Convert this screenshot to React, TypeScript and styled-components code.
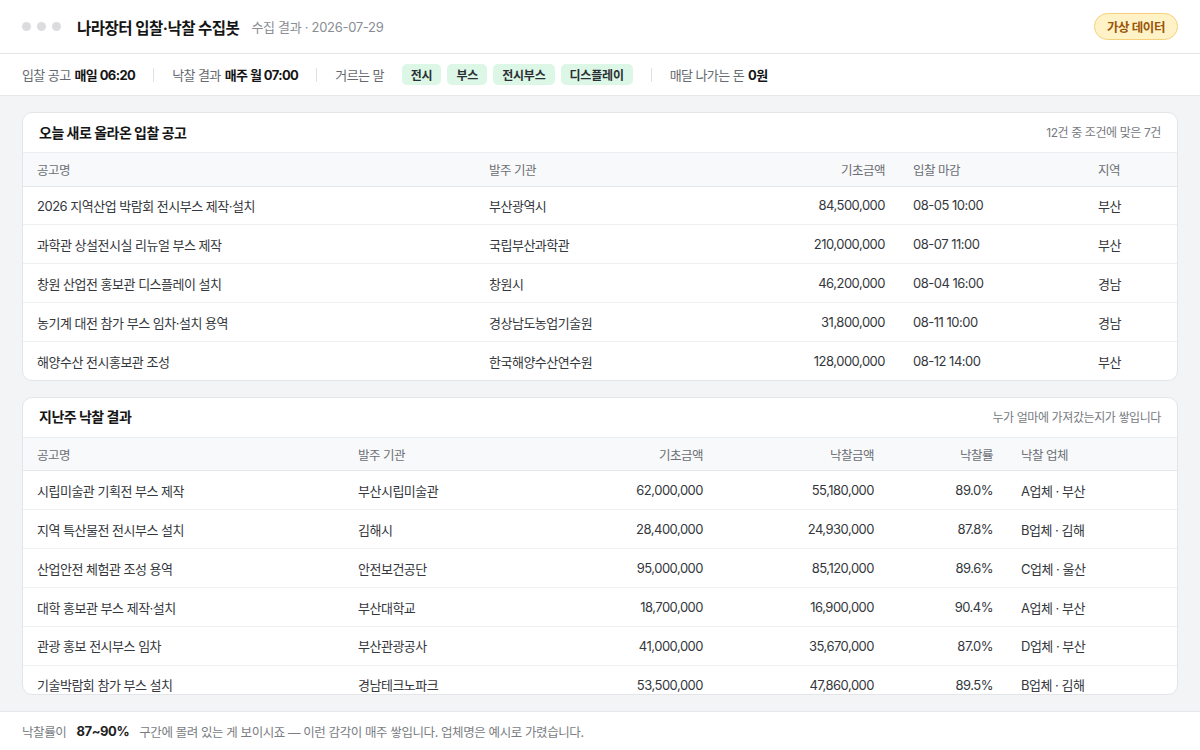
import { styled, createGlobalStyle } from "styled-components"

const GlobalStyle = createGlobalStyle`
    html, body, #root {
        height: 100%;
    }

    body {
        margin: 0;
        font-family: Inter, "Noto Sans CJK KR", sans-serif;
        color: #222;
        background: #fff;
    }
`

const Page = styled.div`
    display: flex;
    flex-direction: column;
    height: 100vh;
    overflow: hidden;
`

const TopBar = styled.header`
    display: flex;
    align-items: center;
    height: 53px;
    padding: 0 22px;
    border-bottom: 1px solid #e6e7ea;
    flex: none;

    .dots {
        display: flex;
        gap: 6px;
        margin-right: 16px;
    }

    .dot {
        width: 9px;
        height: 9px;
        border-radius: 50%;
        background: #dcdcdf;
    }

    .title {
        margin: 0;
        font-size: 15.5px;
        font-weight: 700;
        letter-spacing: -0.5px;
        color: #151515;
    }

    .sub {
        margin-left: 12px;
        font-size: 13px;
        letter-spacing: -0.3px;
        color: #8a8d93;
    }

    .badge {
        margin-left: auto;
        display: flex;
        align-items: center;
        height: 25px;
        padding: 0 12px;
        border: 1px solid #f5d27a;
        border-radius: 999px;
        background: #fef2c6;
        color: #9a560b;
        font-size: 12.5px;
        font-weight: 700;
        letter-spacing: -0.4px;
    }
`

const SubBar = styled.div`
    display: flex;
    align-items: center;
    gap: 18px;
    height: 41px;
    padding: 0 22px;
    border-bottom: 1px solid #e6e7ea;
    font-size: 13px;
    letter-spacing: -0.6px;
    color: #666a70;
    flex: none;

    b {
        color: #151515;
        font-weight: 700;
        margin-left: 4px;
    }
`

const Sep = styled.span`
    width: 1px;
    height: 14px;
    background: #dfe1e4;
`

const ChipList = styled.div`
    display: flex;
    gap: 6px;
`

const Chip = styled.span`
    display: flex;
    align-items: center;
    height: 21px;
    padding: 0 9px;
    border-radius: 5px;
    background: #dcf7e5;
    color: #2a2f35;
    font-size: 12px;
    font-weight: 700;
    letter-spacing: -0.2px;
`

const Main = styled.main`
    display: flex;
    flex-direction: column;
    gap: 16px;
    flex: 1;
    min-height: 0;
    padding: 16px 22px;
    background: #f3f4f6;
`

const Card = styled.section<{ $grow?: boolean }>`
    flex: ${(p) => (p.$grow ? "1" : "none")};
    min-height: 0;
    overflow: hidden;
    border: 1px solid #e3e5e8;
    border-radius: 10px;
    background: #fff;
`

const CardHead = styled.div`
    display: flex;
    align-items: center;
    justify-content: space-between;
    height: 39px;
    padding: 0 16px;
    border-bottom: 1px solid #eceef1;

    h2 {
        margin: 0 0 2px;
        font-size: 14px;
        font-weight: 700;
        letter-spacing: -0.5px;
        color: #151515;
    }

    span {
        margin-bottom: 2px;
        font-size: 12px;
        letter-spacing: -0.4px;
        color: #777a80;
    }
`

const Table = styled.table`
    width: 100%;
    border-collapse: collapse;
    table-layout: fixed;
    font-size: 13px;
    letter-spacing: -0.5px;
`

const Th = styled.th<{ $w: number; $right?: boolean }>`
    box-sizing: border-box;
    width: ${(p) => p.$w}px;
    height: 33px;
    padding: 0 14px;
    background: #f8f9fa;
    border-bottom: 1px solid #e5e7ea;
    text-align: ${(p) => (p.$right ? "right" : "left")};
    font-size: 12.5px;
    font-weight: 400;
    color: #6b6f75;
`

const Td = styled.td<{ $right?: boolean }>`
    height: 37.9px;
    padding: 0 14px;
    border-bottom: 1px solid #eff0f2;
    text-align: ${(p) => (p.$right ? "right" : "left")};
    color: #34373c;
    white-space: nowrap;
    overflow: hidden;

    tr:last-child & {
        border-bottom: none;
    }
`

const Footer = styled.footer`
    display: flex;
    align-items: center;
    gap: 10px;
    height: 38px;
    padding: 0 22px;
    border-top: 1px solid #e6e7ea;
    font-size: 12.5px;
    letter-spacing: -0.4px;
    color: #7a7d83;
    flex: none;

    b {
        font-size: 13px;
        color: #222;
        font-weight: 700;
    }
`

const bids = [
    ["2026 지역산업 박람회 전시부스 제작·설치", "부산광역시", "84,500,000", "08-05 10:00", "부산"],
    ["과학관 상설전시실 리뉴얼 부스 제작", "국립부산과학관", "210,000,000", "08-07 11:00", "부산"],
    ["창원 산업전 홍보관 디스플레이 설치", "창원시", "46,200,000", "08-04 16:00", "경남"],
    ["농기계 대전 참가 부스 임차·설치 용역", "경상남도농업기술원", "31,800,000", "08-11 10:00", "경남"],
    ["해양수산 전시홍보관 조성", "한국해양수산연수원", "128,000,000", "08-12 14:00", "부산"],
]

const awards = [
    ["시립미술관 기획전 부스 제작", "부산시립미술관", "62,000,000", "55,180,000", "89.0%", "A업체 · 부산"],
    ["지역 특산물전 전시부스 설치", "김해시", "28,400,000", "24,930,000", "87.8%", "B업체 · 김해"],
    ["산업안전 체험관 조성 용역", "안전보건공단", "95,000,000", "85,120,000", "89.6%", "C업체 · 울산"],
    ["대학 홍보관 부스 제작·설치", "부산대학교", "18,700,000", "16,900,000", "90.4%", "A업체 · 부산"],
    ["관광 홍보 전시부스 임차", "부산관광공사", "41,000,000", "35,670,000", "87.0%", "D업체 · 부산"],
    ["기술박람회 참가 부스 설치", "경남테크노파크", "53,500,000", "47,860,000", "89.5%", "B업체 · 김해"],
]

const words = ["전시", "부스", "전시부스", "디스플레이"]

export default () => {
    return (
        <Page>
            <GlobalStyle />
            <TopBar>
                <div className="dots">
                    <span className="dot" />
                    <span className="dot" />
                    <span className="dot" />
                </div>
                <h1 className="title">나라장터 입찰·낙찰 수집봇</h1>
                <span className="sub">수집 결과 · 2026-07-29</span>
                <span className="badge">가상 데이터</span>
            </TopBar>

            <SubBar>
                <span>
                    입찰 공고<b>매일 06:20</b>
                </span>
                <Sep />
                <span>
                    낙찰 결과<b>매주 월 07:00</b>
                </span>
                <Sep />
                <span>거르는 말</span>
                <ChipList>
                    {words.map((w) => (
                        <Chip key={w}>{w}</Chip>
                    ))}
                </ChipList>
                <Sep />
                <span>
                    매달 나가는 돈<b>0원</b>
                </span>
            </SubBar>

            <Main>
                <Card>
                    <CardHead>
                        <h2>오늘 새로 올라온 입찰 공고</h2>
                        <span>12건 중 조건에 맞은 7건</span>
                    </CardHead>
                    <Table>
                        <thead>
                            <tr>
                                <Th $w={452}>공고명</Th>
                                <Th $w={250}>발주 기관</Th>
                                <Th $w={174} $right>
                                    기초금액
                                </Th>
                                <Th $w={185}>입찰 마감</Th>
                                <Th $w={93}>지역</Th>
                            </tr>
                        </thead>
                        <tbody>
                            {bids.map((r) => (
                                <tr key={r[0]}>
                                    <Td>{r[0]}</Td>
                                    <Td>{r[1]}</Td>
                                    <Td $right>{r[2]}</Td>
                                    <Td>{r[3]}</Td>
                                    <Td>{r[4]}</Td>
                                </tr>
                            ))}
                        </tbody>
                    </Table>
                </Card>

                <Card $grow>
                    <CardHead>
                        <h2>지난주 낙찰 결과</h2>
                        <span>누가 얼마에 가져갔는지가 쌓입니다</span>
                    </CardHead>
                    <Table>
                        <thead>
                            <tr>
                                <Th $w={321}>공고명</Th>
                                <Th $w={200}>발주 기관</Th>
                                <Th $w={173} $right>
                                    기초금액
                                </Th>
                                <Th $w={171} $right>
                                    낙찰금액
                                </Th>
                                <Th $w={119} $right>
                                    낙찰률
                                </Th>
                                <Th $w={170}>낙찰 업체</Th>
                            </tr>
                        </thead>
                        <tbody>
                            {awards.map((r) => (
                                <tr key={r[0]}>
                                    <Td>{r[0]}</Td>
                                    <Td>{r[1]}</Td>
                                    <Td $right>{r[2]}</Td>
                                    <Td $right>{r[3]}</Td>
                                    <Td $right>{r[4]}</Td>
                                    <Td>{r[5]}</Td>
                                </tr>
                            ))}
                        </tbody>
                    </Table>
                </Card>
            </Main>

            <Footer>
                <span>낙찰률이</span>
                <b>87~90%</b>
                <span>구간에 몰려 있는 게 보이시죠 — 이런 감각이 매주 쌓입니다. 업체명은 예시로 가렸습니다.</span>
            </Footer>
        </Page>
    )
}
